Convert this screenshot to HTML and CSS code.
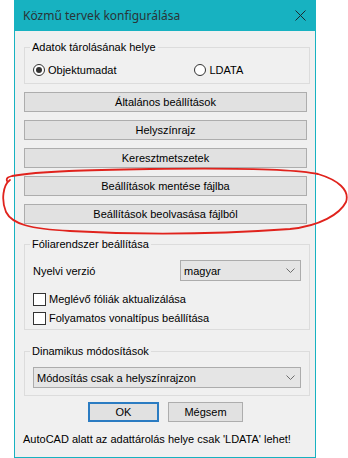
FILE: index.html
```html
<!DOCTYPE html>
<html lang="hu">
<head>
  <meta charset="UTF-8" />
  <title>Közmű tervek konfigurálása</title>
  <link rel="stylesheet" href="styles.css">
</head>
<body>

  <!-- Dialog window -->
  <div class="window">
    <div class="titlebar">
      <span class="title">Közmű tervek konfigurálása</span>
      <span class="close">
        <svg width="11" height="11" viewBox="0 0 11 11"><path d="M0.5 0.5 L10.5 10.5 M10.5 0.5 L0.5 10.5" stroke="#1b2a30" stroke-width="1" fill="none"/></svg>
      </span>
    </div>

    <div class="content">
      <fieldset class="group group-storage">
        <legend>Adatok tárolásának helye</legend>
        <div class="radio-row">
          <label class="radio checked"><span class="dot"></span>Objektumadat</label>
          <label class="radio radio-ldata"><span class="dot"></span>LDATA</label>
        </div>
      </fieldset>

      <div class="button-list">
        <button class="btn">Általános beállítások</button>
        <button class="btn">Helyszínrajz</button>
        <button class="btn">Keresztmetszetek</button>
        <button class="btn">Beállítások mentése fájlba</button>
        <button class="btn">Beállítások beolvasása fájlból</button>
      </div>

      <fieldset class="group group-foil">
        <legend>Fóliarendszer beállítása</legend>
        <div class="field-row">
          <span>Nyelvi verzió</span>
          <div class="combo combo-lang">
            <span>magyar</span>
            <svg width="9" height="5" viewBox="0 0 9 5"><path d="M0.5 0.5 L4.5 4.5 L8.5 0.5" stroke="#6d6d6d" fill="none"/></svg>
          </div>
        </div>
        <label class="check check-first"><span class="box"></span>Meglévő fóliák aktualizálása</label>
        <label class="check"><span class="box"></span>Folyamatos vonaltípus beállítása</label>
      </fieldset>

      <fieldset class="group group-dyn">
        <legend>Dinamikus módosítások</legend>
        <div class="combo combo-wide">
          <span>Módosítás csak a helyszínrajzon</span>
          <svg width="9" height="5" viewBox="0 0 9 5"><path d="M0.5 0.5 L4.5 4.5 L8.5 0.5" stroke="#6d6d6d" fill="none"/></svg>
        </div>
      </fieldset>

      <div class="dialog-buttons">
        <button class="btn btn-ok">OK</button>
        <button class="btn btn-cancel">Mégsem</button>
      </div>

      <p class="note">AutoCAD alatt az adattárolás helye csak 'LDATA' lehet!</p>
    </div>
  </div>

  <!-- Hand-drawn red mark over the two file buttons -->
  <svg class="annotation" width="348" height="458" viewBox="0 0 348 458">
    <path d="M10 180 C3 185, 1 200, 6 212 C12 224, 30 229, 70 231 C140 235, 220 234, 290 229 C320 226, 340 214, 346 202 C350 190, 338 180, 318 174 C290 168, 220 168, 150 169 C90 170, 40 171, 12 176 C8 177, 6 178, 7 181" stroke="#e0231d" stroke-width="1.8" fill="none" stroke-linecap="round"/>
  </svg>

</body>
</html>
```

FILE: styles.css
```css
/* Page */
body {
  margin: 0;
  background: #fff;
  font-family: "Liberation Sans", Arial, sans-serif;
  font-size: 11px;
  color: #000;
  position: relative;
}

/* Window frame */
.window {
  margin-left: 14px;
  width: 302px;
  height: 458px;
  box-sizing: border-box;
  border: 1px solid #17b2c1;
  border-top: none;
  background: #f0f0f0;
}

.titlebar {
  height: 31px;
  background: #17b2c1;
  display: flex;
  align-items: center;
  padding: 0 9px 0 8px;
}

.title {
  font-family: "Noto Sans", sans-serif;
  font-size: 12px;
  color: #2a3437;
  flex: 1;
}

.close {
  display: flex;
}

.content {
  padding-left: 9px;
}

/* Group boxes */
.group {
  width: 286px;
  box-sizing: border-box;
  margin: 0;
  border: 1px solid #dcdcdc;
  padding: 8px 8px 5px 7px;
}

.group legend {
  line-height: 14px;
  padding: 0 2px;
  margin-left: -2px;
}

.group-storage {
  margin-top: 9px;
}

.group-foil {
  margin-top: 13px;
  padding-top: 9px;
  padding-bottom: 3px;
}

.group-dyn {
  margin-top: 14px;
  padding-top: 9px;
  padding-bottom: 7px;
}

/* Radio buttons */
.radio-row {
  display: flex;
  height: 16px;
  align-items: center;
}

.radio {
  display: flex;
  align-items: center;
  gap: 3px;
}

.radio-ldata {
  margin-left: 77px;
}

.radio .dot {
  width: 12px;
  height: 12px;
  box-sizing: border-box;
  border: 1px solid #333;
  border-radius: 50%;
  background: #fff;
  margin-left: 1px;
  display: flex;
  align-items: center;
  justify-content: center;
}

.radio.checked .dot::after {
  content: "";
  width: 6px;
  height: 6px;
  border-radius: 50%;
  background: #333;
}

/* Push buttons */
.btn {
  font: inherit;
  color: #000;
  background: #e1e1e1;
  border: 1px solid #adadad;
  height: 20px;
  padding: 0;
  margin: 0;
  box-sizing: border-box;
}

.button-list {
  margin-top: 8px;
  display: flex;
  flex-direction: column;
  gap: 8px;
  width: 283px;
}

/* Combo boxes */
.field-row {
  display: flex;
  align-items: center;
  justify-content: space-between;
  padding-left: 1px;
}

.combo {
  height: 21px;
  box-sizing: border-box;
  border: 1px solid #acacac;
  background: #e5e5e5;
  display: flex;
  align-items: center;
  justify-content: space-between;
  padding: 0 5px 0 3px;
}

.combo-lang {
  width: 121px;
}

.combo-wide {
  width: 268px;
  margin-left: 1px;
}

/* Check boxes */
.check {
  display: flex;
  align-items: center;
  gap: 3px;
  height: 16px;
  margin-top: 3px;
}

.check-first {
  margin-top: 10px;
}

.check .box {
  width: 13px;
  height: 13px;
  box-sizing: border-box;
  border: 1px solid #333;
  background: #fff;
  margin-left: 1px;
}

/* Dialog buttons */
.dialog-buttons {
  display: flex;
  gap: 9px;
  margin: 6px 0 0 64px;
}

.btn-ok {
  width: 71px;
  border: 2px solid #2b7cc2;
}

.btn-cancel {
  width: 75px;
}

.note {
  margin: 10px 0 0 -1px;
  line-height: 14px;
}

/* Red hand mark */
.annotation {
  position: absolute;
  top: 0;
  left: 0;
  pointer-events: none;
}
```
